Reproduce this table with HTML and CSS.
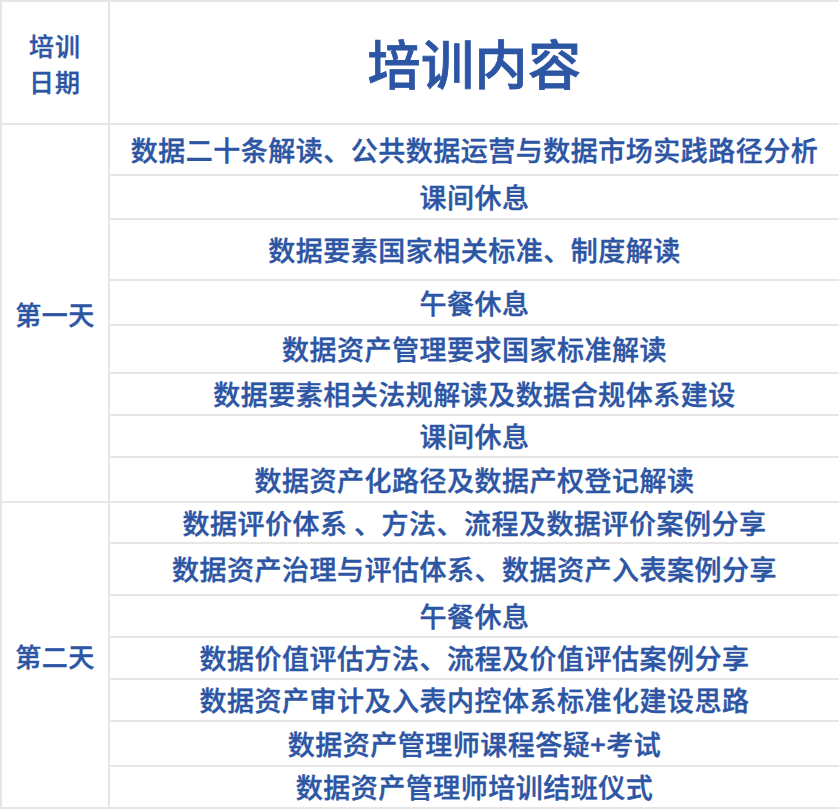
FILE: index.html
```html
<!DOCTYPE html>
<html lang="zh-CN">
<head>
<meta charset="utf-8">
<title>培训内容</title>
<link rel="stylesheet" href="styles.css">
</head>
<body>
<table class="schedule">
  <colgroup>
    <col class="col-date">
    <col class="col-content">
  </colgroup>
  <tr class="r-head">
    <th class="date-head">培训<br>日期</th>
    <th class="content-head">培训内容</th>
  </tr>
  <tr class="r51">
    <td class="day" rowspan="8">第一天</td>
    <td>数据二十条解读、公共数据运营与数据市场实践路径分析</td>
  </tr>
  <tr class="r44"><td>课间休息</td></tr>
  <tr class="r61"><td>数据要素国家相关标准、制度解读</td></tr>
  <tr class="r45"><td>午餐休息</td></tr>
  <tr class="r48"><td>数据资产管理要求国家标准解读</td></tr>
  <tr class="r42"><td>数据要素相关法规解读及数据合规体系建设</td></tr>
  <tr class="r42"><td>课间休息</td></tr>
  <tr class="r45"><td>数据资产化路径及数据产权登记解读</td></tr>
  <tr class="r41">
    <td class="day" rowspan="7">第二天</td>
    <td>数据评价体系 、方法、流程及数据评价案例分享</td>
  </tr>
  <tr class="r52"><td>数据资产治理与评估体系、数据资产入表案例分享</td></tr>
  <tr class="r42"><td>午餐休息</td></tr>
  <tr class="r42"><td>数据价值评估方法、流程及价值评估案例分享</td></tr>
  <tr class="r42"><td>数据资产审计及入表内控体系标准化建设思路</td></tr>
  <tr class="r45"><td>数据资产管理师课程答疑+考试</td></tr>
  <tr class="r42"><td>数据资产管理师培训结班仪式</td></tr>
</table>
</body>
</html>
```

FILE: styles.css
```css
html, body {
  margin: 0;
  padding: 0;
  background: #ffffff;
}

.schedule {
  width: 839px;
  border-collapse: collapse;
  table-layout: fixed;
  font-family: "Noto Sans CJK SC", "Noto Sans", sans-serif;
  color: #2c55a4;
  font-weight: 500;
}

.col-date { width: 108px; }
.col-content { width: 731px; }

.schedule th,
.schedule td {
  border: 2px solid #e6e6e6;
  padding: 0;
  padding-top: 1px;
  text-align: center;
  vertical-align: middle;
  font-size: 27px;
  letter-spacing: 0.5px;
  line-height: 1.2;
  font-weight: 500;
  -webkit-text-stroke: 0.4px currentColor;
}

.schedule .date-head {
  font-size: 25px;
  line-height: 36px;
  letter-spacing: 1px;
}

.schedule .content-head {
  font-size: 53px;
  letter-spacing: 0.5px;
  -webkit-text-stroke: 0.8px currentColor;
}

.schedule .day {
  font-size: 26px;
}

.r-head { height: 123px; }
.r41 { height: 41px; }
.r42 { height: 42px; }
.r44 { height: 44px; }
.r45 { height: 45px; }
.r48 { height: 48px; }
.r51 { height: 51px; }
.r52 { height: 52px; }
.r61 { height: 61px; }
```
